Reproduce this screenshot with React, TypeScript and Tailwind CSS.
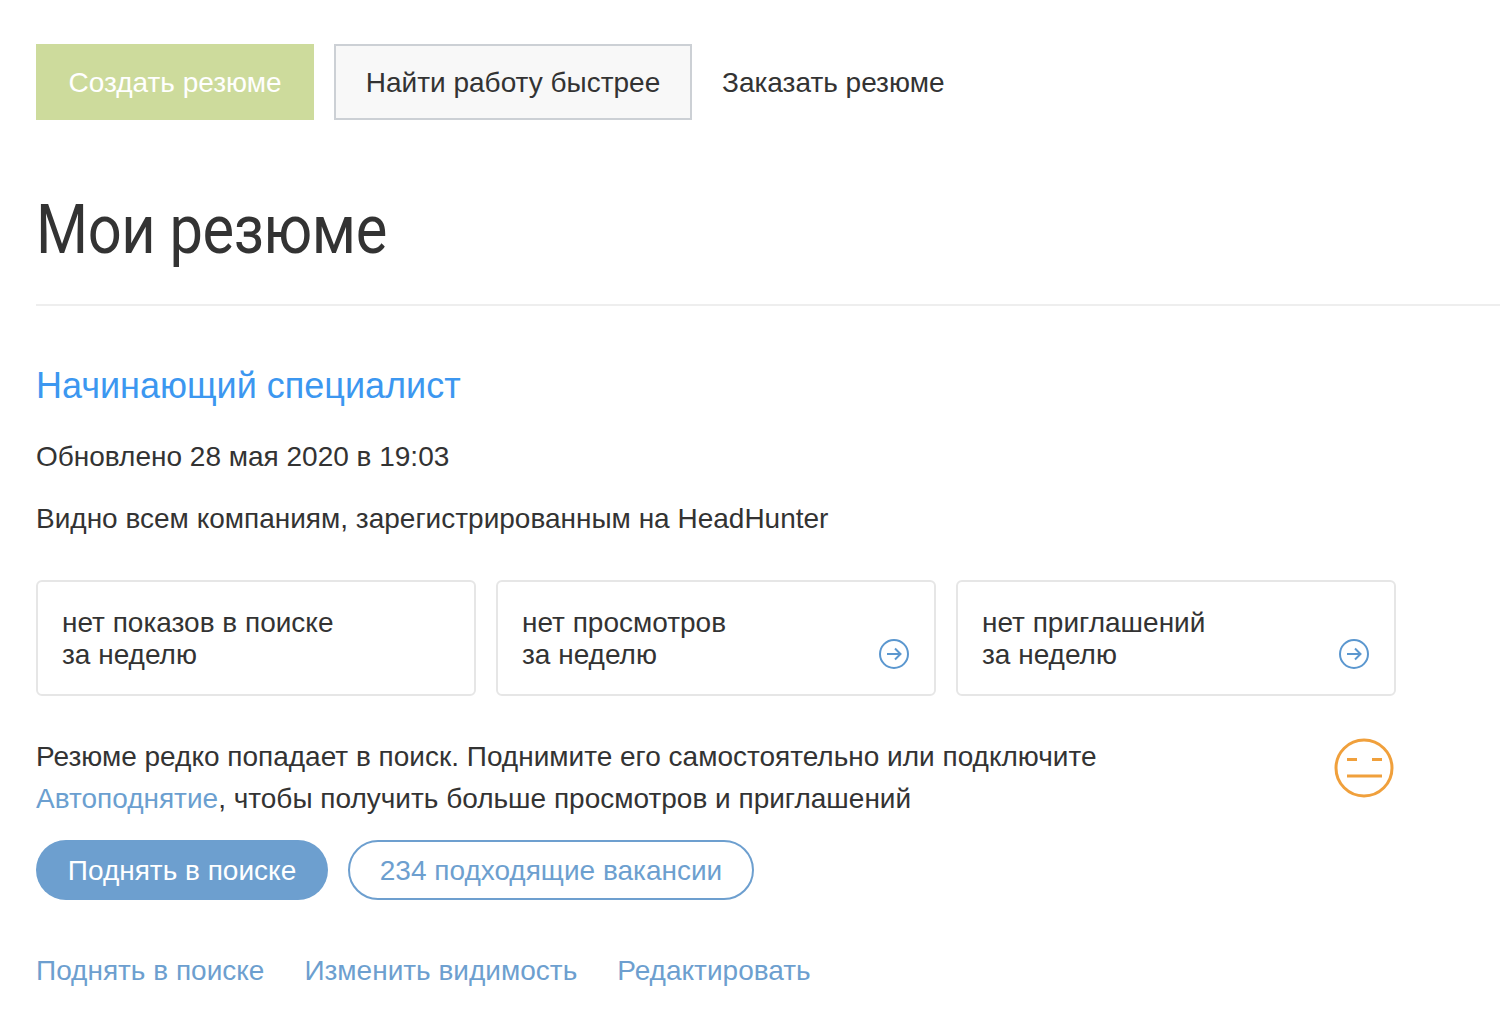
function ArrowIcon() {
  return (
    <svg width="30" height="30" viewBox="0 0 30 30" fill="none" stroke="#5b97cf" strokeWidth="2" className="absolute right-[25px] bottom-[25px]">
      <circle cx="15" cy="15" r="14" />
      <path d="M8 15h13.5M16 9.5l5.5 5.5-5.5 5.5" />
    </svg>
  )
}

function SmileIcon() {
  return (
    <svg width="60" height="60" viewBox="0 0 60 60" fill="none" stroke="#f0a03c" strokeWidth="3" className="shrink-0 mt-[2px] mr-[2px]">
      <circle cx="30" cy="30" r="28" />
      <path d="M13 21.5h10M38 21.5h10M13 38h35" />
    </svg>
  )
}

const stats = [
  { first: 'нет показов в поиске', arrow: false },
  { first: 'нет просмотров', arrow: true },
  { first: 'нет приглашений', arrow: true },
]

export default function App() {
  return (
    <div className="min-h-[1018px] bg-white pl-9 pt-11 font-['Liberation_Sans',Arial,sans-serif] text-[28px] text-[#333] overflow-hidden">
      <div className="flex items-center">
        <button className="h-[76px] w-[278px] bg-[#cddb9c] pt-0.5 text-white leading-8">Создать резюме</button>
        <button className="ml-5 h-[76px] w-[358px] border-2 border-[#ccd0d5] bg-[#f8f8f8] pt-0.5 leading-8">Найти работу быстрее</button>
        <a className="ml-[30px] pt-0.5 leading-8">Заказать резюме</a>
      </div>

      <h1 className="mt-[70px] origin-left scale-x-[0.877] text-[68px] leading-[80px] text-[#333] font-['Roboto',sans-serif] tracking-[-0.5px]">Мои резюме</h1>
      <div className="mt-[34px] h-0.5 bg-[#eeeeee]" />

      <a className="mt-[58px] block text-[36px] leading-[44px] text-[#3c97f0]">Начинающий специалист</a>
      <p className="mt-[31px] leading-9">Обновлено 28 мая 2020 в 19:03</p>
      <p className="mt-[26px] leading-9">Видно всем компаниям, зарегистрированным на HeadHunter</p>

      <div className="mt-[43px] flex gap-5">
        {stats.map((s) => (
          <div key={s.first} className="relative h-[116px] w-[440px] rounded-md border-2 border-[#e6e6e6] px-6 pt-[25px] leading-8">
            {s.first}
            <br />
            за неделю
            {s.arrow && <ArrowIcon />}
          </div>
        ))}
      </div>

      <div className="mt-[40px] flex w-[1360px] justify-between">
        <p className="leading-[42px]">
          Резюме редко попадает в поиск. Поднимите его самостоятельно или подключите
          <br />
          <a className="text-[#6b9fd0]">Автоподнятие</a>, чтобы получить больше просмотров и приглашений
        </p>
        <SmileIcon />
      </div>

      <div className="mt-[20px] flex gap-5">
        <button className="h-[60px] w-[292px] rounded-[30px] bg-[#6d9fcf] pt-0.5 text-white">Поднять в поиске</button>
        <button className="h-[60px] w-[406px] rounded-[30px] border-2 border-[#6d9fcf] pt-0.5 text-[#6d9fcf]">234 подходящие вакансии</button>
      </div>

      <div className="mt-[53px] flex gap-10 leading-9 text-[#6d9fcf]">
        <a>Поднять в поиске</a>
        <a>Изменить видимость</a>
        <a>Редактировать</a>
      </div>
    </div>
  )
}
